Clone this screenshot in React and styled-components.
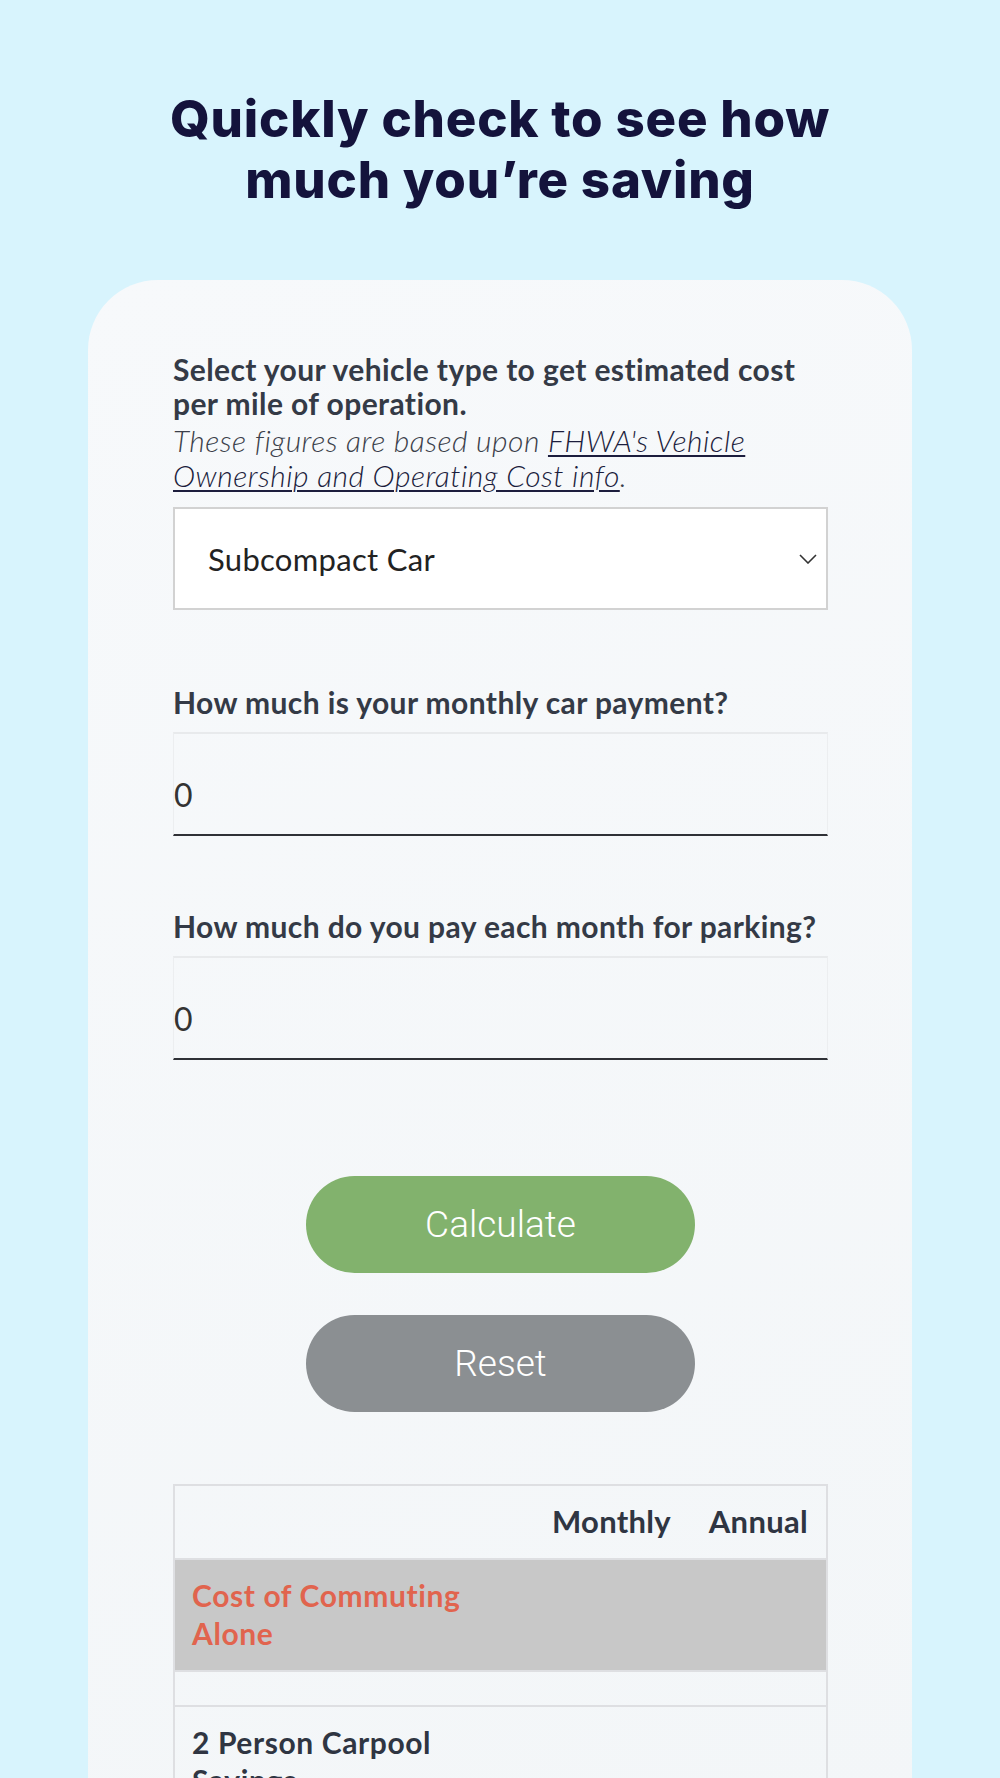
import React from "react";
import styled, { createGlobalStyle } from "styled-components";

const Global = createGlobalStyle`
  html, body { margin: 0; padding: 0; }
  body {
    background: #d8f4fd;
    font-family: Lato, "Noto Sans", sans-serif;
    color: #343a46;
  }
  * { box-sizing: border-box; }
`;

const Page = styled.main`
  min-height: 1778px;
  padding-top: 88px;
  overflow: hidden;
`;

const Title = styled.h1`
  margin: 0 auto;
  max-width: 720px;
  font-family: Inter, "Noto Sans", sans-serif;
  font-weight: 800;
  font-size: 51px;
  line-height: 61px;
  letter-spacing: 0.8px;
  color: #14133c;
  text-align: center;
`;

const Card = styled.section`
  margin: 70px 88px 0;
  min-height: 1500px;
  padding: 72px 84px 0 85px;
  border-radius: 70px 70px 0 0;
  background: linear-gradient(160deg, #f7f9fb 0%, #f3f6f8 100%);
`;

const Label = styled.label`
  display: block;
  margin: ${(p) => p.$top || 0}px 0 ${(p) => (p.$bottom ?? 13)}px;
  font-weight: 700;
  font-size: 30px;
  line-height: 34px;
  letter-spacing: 0.4px;
  color: #343a46;
`;

const Note = styled.p`
  margin: 3px 0 14px;
  font-weight: 300;
  font-style: italic;
  font-size: 30px;
  line-height: 35px;
  letter-spacing: 0.5px;
  color: #3b3f4a;
`;

const NoteLink = styled.a`
  color: #1c1d3d;
  text-decoration: underline;
  text-decoration-thickness: 2px;
  text-underline-offset: 3px;
`;

const SelectBox = styled.div`
  height: 103px;
  background: #ffffff;
  border: 2px solid #d2d2d2;
  display: flex;
  align-items: center;
  padding: 0 9px 0 33px;
`;

const SelectText = styled.span`
  flex: 1;
  font-size: 31px;
  letter-spacing: 0.3px;
  color: #222222;
`;

const Chevron = () => (
  <svg width="18" height="10" viewBox="0 0 18 10" fill="none">
    <path d="M1 1 L9 9 L17 1" stroke="#333" strokeWidth="1.6" />
  </svg>
);

const NumberInput = styled.input`
  display: block;
  width: 100%;
  height: 104px;
  margin: 0;
  padding: 21px 0 0 0;
  border: 1px solid #eceef0;
  border-top: 2px solid #e8eaec;
  border-bottom: 2px solid #2f3136;
  background: transparent;
  font-family: Lato, "Noto Sans", sans-serif;
  font-size: 32px;
  color: #333333;
  outline: none;
`;

const Buttons = styled.div`
  margin-top: 116px;
  display: flex;
  flex-direction: column;
  align-items: center;
  gap: 42px;
`;

const PillButton = styled.button`
  width: 389px;
  height: 97px;
  border: none;
  border-radius: 49px;
  background: ${(p) => (p.$variant === "gray" ? "#8b8f92" : "#82b26d")};
  color: #ffffff;
  font-family: Roboto, sans-serif;
  font-weight: 300;
  font-size: 37px;
  cursor: pointer;
`;

const Table = styled.table`
  margin-top: 72px;
  width: 100%;
  border-collapse: collapse;
  table-layout: fixed;
  border: 2px solid #dedfe2;
`;

const HeadCell = styled.th`
  padding: 16px 18px 18px 17px;
  font-weight: 700;
  font-size: 31px;
  line-height: 38px;
  letter-spacing: 0.3px;
  color: #2f3542;
  text-align: ${(p) => p.$align || "left"};
  border-bottom: 2px solid #dedfe2;
`;

const Row = styled.tr`
  background: ${(p) => (p.$shade ? "#c8c8c8" : "transparent")};
  border-bottom: 2px solid #dedfe2;
`;

const Cell = styled.td`
  padding: 16px 18px 18px 17px;
  font-weight: 700;
  font-size: 30px;
  line-height: 38px;
  letter-spacing: 0.6px;
  color: ${(p) => (p.$accent ? "#e1644e" : "#2f3542")};
  vertical-align: top;
`;

const SpacerCell = styled.td`
  height: 35px;
  padding: 0;
`;

export default function App() {
  return (
    <>
      <Global />
      <Page>
        <Title>Quickly check to see how much you’re saving</Title>
        <Card>
          <Label $top={0} $bottom={0}>
            Select your vehicle type to get estimated cost per mile of operation.
          </Label>
          <Note>
            These figures are based upon{" "}
            <NoteLink href="#">FHWA's Vehicle Ownership and Operating Cost info</NoteLink>.
          </Note>
          <SelectBox>
            <SelectText>Subcompact Car</SelectText>
            <Chevron />
          </SelectBox>

          <Label $top={75}>How much is your monthly car payment?</Label>
          <NumberInput type="text" defaultValue="0" />

          <Label $top={73}>How much do you pay each month for parking?</Label>
          <NumberInput type="text" defaultValue="0" />

          <Buttons>
            <PillButton>Calculate</PillButton>
            <PillButton $variant="gray">Reset</PillButton>
          </Buttons>

          <Table>
            <colgroup>
              <col />
              <col style={{ width: 156 }} />
              <col style={{ width: 138 }} />
            </colgroup>
            <thead>
              <tr>
                <HeadCell />
                <HeadCell $align="right">Monthly</HeadCell>
                <HeadCell $align="right">Annual</HeadCell>
              </tr>
            </thead>
            <tbody>
              <Row $shade>
                <Cell $accent>Cost of Commuting Alone</Cell>
                <Cell />
                <Cell />
              </Row>
              <Row>
                <SpacerCell />
                <SpacerCell />
                <SpacerCell />
              </Row>
              <Row>
                <Cell>2 Person Carpool Savings</Cell>
                <Cell />
                <Cell />
              </Row>
            </tbody>
          </Table>
        </Card>
      </Page>
    </>
  );
}
